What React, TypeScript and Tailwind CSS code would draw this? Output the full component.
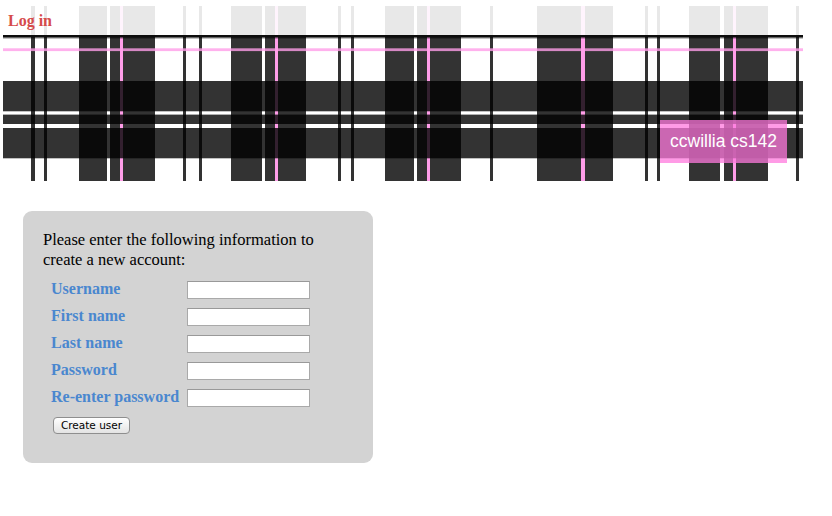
const darkCols: [number, number][] = [
  [28, 4], [41, 3], [76, 28], [107, 45],
  [180, 3], [196, 3], [228, 31], [262, 41],
  [335, 3], [348, 3], [382, 29], [414, 44],
  [487, 3], [534, 76],
  [642, 3], [654, 3], [686, 31], [721, 44],
  [793, 3],
];

const pinkCols: [number, number][] = [
  [117, 3], [272, 3], [424, 3], [578, 4], [730, 3],
];

const darkRows: [number, number][] = [
  [75, 30.3], [108.6, 9.4], [122, 30.3],
];

function Tartan() {
  return (
    <svg width="800" height="175" viewBox="0 0 800 175" className="block">
      <rect x="0" y="0" width="800" height="175" fill="#ffffff" />
      {darkCols.map(([x, w]) => (
        <rect key={'d' + x} x={x} y="0" width={w} height="175" fill="rgba(0,0,0,0.8)" />
      ))}
      {pinkCols.map(([x, w]) => (
        <rect key={'p' + x} x={x} y="0" width={w} height="175" fill="#ff9ee9" />
      ))}
      <rect x="0" y="42.3" width="800" height="2.8" fill="rgba(255,158,233,0.8)" />
      {darkRows.map(([y, h]) => (
        <rect key={'r' + y} x="0" y={y} width="800" height={h} fill="rgba(0,0,0,0.8)" />
      ))}
      <rect x="0" y="29" width="800" height="2" fill="#0d0d0d" />
      <rect x="0" y="31" width="800" height="1.4" fill="rgba(0,0,0,0.6)" />
    </svg>
  );
}

const fields = ['Username', 'First name', 'Last name', 'Password', 'Re-enter password'];

export default function App() {
  return (
    <div className="w-full h-[516px] bg-white overflow-hidden">
      {/* Banner */}
      <div className="relative ml-[3px] pt-[6px] w-[800px]">
        <Tartan />

        <div className="absolute left-[-3px] top-[6px] w-[813px] h-[29px] bg-[rgba(255,255,255,0.89)] flex items-center pl-[8px]">
          <span className="text-[16px] font-bold text-[#d64b4b] font-['Liberation_Serif',serif] leading-none pt-[1px]">
            Log in
          </span>
        </div>

        <div className="absolute right-[16px] bottom-[18px] h-[43px] px-[10px] bg-[rgba(255,121,221,0.75)] flex items-center">
          <span className="text-white text-[17.5px] font-['Liberation_Sans',sans-serif] leading-none">
            ccwillia cs142
          </span>
        </div>
      </div>

      {/* New account form */}
      <div className="mt-[30px] ml-[23px] w-[350px] h-[252px] bg-[#d3d3d3] rounded-[9px] pl-[20px] pt-[19px] font-['Liberation_Serif',serif]">
        <p className="text-[16.5px] leading-[20px] text-black w-[290px]">
          Please enter the following information to create a new account:
        </p>

        <div className="mt-[6px] ml-[8px]">
          {fields.map((f) => (
            <div key={f} className="flex items-center h-[27px]">
              <label className="w-[136px] text-[16px] font-bold text-[#4a87cf] leading-none -mt-[2px]">
                {f}
              </label>
              <input
                type={f.includes('assword') ? 'password' : 'text'}
                className="w-[123px] h-[18px] bg-white border border-[#a9a9a9] border-t-[#999] outline-none"
              />
            </div>
          ))}
          <button className="mt-[6px] ml-[2px] w-[77px] h-[17px] rounded-[4px] border border-[#8e8e8e] bg-gradient-to-b from-white to-[#e3e3e3] text-[10.5px] text-black leading-none font-['DejaVu_Sans',sans-serif]">
            Create user
          </button>
        </div>
      </div>
    </div>
  );
}
